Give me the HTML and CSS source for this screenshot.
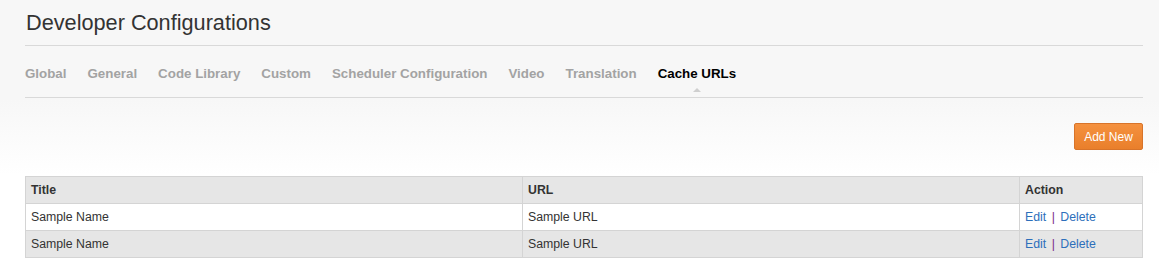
FILE: index.html
```html
<!DOCTYPE html>
<html lang="en">
<head>
  <meta charset="UTF-8">
  <title>Developer Configurations</title>
  <link rel="stylesheet" href="styles.css">
</head>
<body>
  <div class="page">
    <h1 class="page-title">Developer Configurations</h1>

    <ul class="tabs">
      <li><a href="#">Global</a></li>
      <li><a href="#">General</a></li>
      <li><a href="#">Code Library</a></li>
      <li><a href="#">Custom</a></li>
      <li><a href="#">Scheduler Configuration</a></li>
      <li><a href="#">Video</a></li>
      <li><a href="#">Translation</a></li>
      <li class="active"><a href="#">Cache URLs</a></li>
    </ul>

    <div class="toolbar">
      <button class="btn-add">Add New</button>
    </div>

    <table class="grid">
      <thead>
        <tr>
          <th class="col-title">Title</th>
          <th class="col-url">URL</th>
          <th class="col-action">Action</th>
        </tr>
      </thead>
      <tbody>
        <tr>
          <td>Sample Name</td>
          <td>Sample URL</td>
          <td><a href="#">Edit</a> <span class="sep">|</span> <a href="#">Delete</a></td>
        </tr>
        <tr class="alt">
          <td>Sample Name</td>
          <td>Sample URL</td>
          <td><a href="#">Edit</a> <span class="sep">|</span> <a href="#">Delete</a></td>
        </tr>
      </tbody>
    </table>
  </div>
</body>
</html>
```

FILE: styles.css
```css
html, body {
  margin: 0;
  padding: 0;
}
body {
  font-family: "Liberation Sans", Arial, sans-serif;
  color: #333;
  background: linear-gradient(to bottom, #f7f7f7 0px, #f7f7f7 100px, #ffffff 175px);
  min-height: 279px;
}
.page {
  padding: 0 16px 0 25px;
}
.page-title {
  margin: 0;
  padding: 10px 0 0 1px;
  height: 35px;
  font-size: 21.7px;
  font-weight: normal;
  color: #333;
  border-bottom: 1px solid #d9d9d9;
  box-sizing: content-box;
}
.tabs {
  list-style: none;
  margin: 0;
  padding: 0;
  display: flex;
  gap: 21px;
  height: 51px;
  border-bottom: 1px solid #d9d9d9;
}
.tabs li {
  position: relative;
  padding-top: 18px;
}
.tabs a {
  font-size: 13.33px;
  font-weight: bold;
  color: #a3a3a3;
  text-decoration: none;
}
.tabs li.active a {
  color: #000;
}
.tabs li.active::after {
  content: "";
  position: absolute;
  left: 50%;
  top: 42px;
  margin-left: -4px;
  border-left: 4px solid transparent;
  border-right: 4px solid transparent;
  border-bottom: 4px solid #cfcfcf;
}
.toolbar {
  display: flex;
  justify-content: flex-end;
  padding-top: 25px;
  height: 53px;
}
.btn-add {
  width: 69px;
  height: 27px;
  padding: 0;
  font-family: "Liberation Sans", Arial, sans-serif;
  font-size: 12px;
  color: #fff;
  background: linear-gradient(to bottom, #f5913f, #e97f2b);
  border: 1px solid #d8742a;
  border-radius: 2px;
  cursor: pointer;
}
.grid {
  width: 100%;
  border-collapse: collapse;
  font-size: 12.3px;
  color: #333;
}
.grid th, .grid td {
  border: 1px solid #d4d4d4;
  height: 26px;
  padding: 0 5px;
  text-align: left;
}
.grid th {
  background: #e6e6e6;
  font-weight: bold;
}
.grid tbody tr {
  background: #fff;
}
.grid tbody tr.alt {
  background: #e6e6e6;
}
.col-title, .col-url {
  width: 486px;
}
.grid a {
  color: #2d6fbb;
  text-decoration: none;
}
.sep {
  color: #7a2d8a;
  margin: 0 2px;
}
```
